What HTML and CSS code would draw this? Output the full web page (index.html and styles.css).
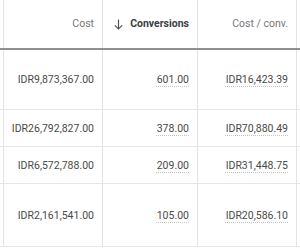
FILE: index.html
```html
<!DOCTYPE html>
<html>
<head>
<meta charset="utf-8">
<link rel="stylesheet" href="styles.css">
</head>
<body>
<div class="table">
  <div class="row head">
    <div class="cell edge"></div>
    <div class="cell">Cost</div>
    <div class="cell sorted"><svg class="arrow" width="9" height="11" viewBox="0 0 9 11"><path d="M4.5 0.5 V10 M0.8 6.3 L4.5 10 L8.2 6.3" fill="none" stroke="#555" stroke-width="1.2"/></svg><span class="label">Conversions</span></div>
    <div class="cell">Cost / conv.</div>
    <div class="cell tail"></div>
  </div>
  <div class="row r1">
    <div class="cell edge"></div>
    <div class="cell">IDR9,873,367.00</div>
    <div class="cell"><span class="dot">601.00</span></div>
    <div class="cell"><span class="dot">IDR16,423.39</span></div>
    <div class="cell tail"></div>
  </div>
  <div class="row r2">
    <div class="cell edge"></div>
    <div class="cell">IDR26,792,827.00</div>
    <div class="cell"><span class="dot">378.00</span></div>
    <div class="cell"><span class="dot">IDR70,880.49</span></div>
    <div class="cell tail"></div>
  </div>
  <div class="row r3">
    <div class="cell edge"></div>
    <div class="cell">IDR6,572,788.00</div>
    <div class="cell"><span class="dot">209.00</span></div>
    <div class="cell"><span class="dot">IDR31,448.75</span></div>
    <div class="cell tail"></div>
  </div>
  <div class="row r4">
    <div class="cell edge"></div>
    <div class="cell">IDR2,161,541.00</div>
    <div class="cell"><span class="dot">105.00</span></div>
    <div class="cell"><span class="dot">IDR20,586.10</span></div>
    <div class="cell tail"></div>
  </div>
</div>
</body>
</html>
```
FILE: styles.css
```css
html, body {
  margin: 0;
  padding: 0;
  background: #fff;
}
body {
  font-family: Roboto, "Liberation Sans", sans-serif;
  font-size: 10.5px;
  color: #4a4a4a;
  width: 300px;
  height: 250px;
  overflow: hidden;
}
.table {
  display: flex;
  flex-direction: column;
}
.row {
  display: grid;
  grid-template-columns: 3px 99px 95px 99px 1fr;
  border-bottom: 1px solid #e6e6e6;
}
.cell {
  display: flex;
  align-items: center;
  justify-content: flex-end;
  padding-right: 8px;
  border-left: 1px solid #e3e3e3;
  white-space: nowrap;
}
.cell.edge {
  border-left: none;
  padding: 0;
}
.cell.tail {
  padding: 0;
}
.head {
  height: 48px;
  border-bottom: 2px solid #8f8f8f;
  color: #777;
}
.head .cell {
  padding-bottom: 1px;
}
.head .sorted {
  color: #3c4043;
  font-weight: 700;
}
.arrow {
  margin-right: 7px;
  margin-top: 1px;
}
.r1 { height: 59px; }
.r2 { height: 36px; }
.r3 { height: 36px; }
.r4 { height: 62px; }
.dot {
  text-decoration: underline dotted #c4c4c4;
  text-underline-offset: 3px;
}
```
